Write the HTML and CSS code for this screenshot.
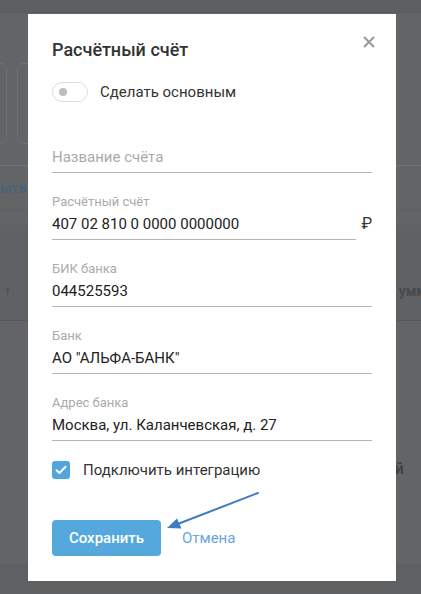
FILE: index.html
```html
<!DOCTYPE html>
<html lang="ru">
<head>
<meta charset="utf-8">
<link rel="stylesheet" href="styles.css">
</head>
<body>
<div class="page">
  <div class="topbar"></div>
  <div class="cards">
    <div class="card card-a"></div>
    <div class="card card-b"></div>
  </div>
  <div class="tabs"><span class="tab-text">ыть</span></div>
  <div class="band"></div>
  <div class="thead">
    <span class="sort">↑</span>
    <span class="col">умм</span>
  </div>
  <div class="tbody">
    <span class="cell">й</span>
  </div>
  <div class="footer"></div>

  <div class="modal">
    <div class="modal-head">
      <h1 class="title">Расчётный счёт</h1>
      <svg class="close" width="12" height="12" viewBox="0 0 12 12"><path d="M1 1L11 11M11 1L1 11" stroke="#9a9a9a" stroke-width="2"/></svg>
    </div>
    <div class="toggle-row">
      <span class="toggle"><span class="knob"></span></span>
      <span class="toggle-text">Сделать основным</span>
    </div>
    <div class="field first">
      <div class="line"><span class="placeholder">Название счёта</span></div>
    </div>
    <div class="field">
      <div class="label">Расчётный счёт</div>
      <div class="with-suffix">
        <div class="line grow"><span class="value">407 02 810 0 0000 0000000</span></div>
        <span class="suffix">₽</span>
      </div>
    </div>
    <div class="field">
      <div class="label">БИК банка</div>
      <div class="line"><span class="value">044525593</span></div>
    </div>
    <div class="field">
      <div class="label">Банк</div>
      <div class="line"><span class="value">АО "АЛЬФА-БАНК"</span></div>
    </div>
    <div class="field">
      <div class="label">Адрес банка</div>
      <div class="line"><span class="value">Москва, ул. Каланчевская, д. 27</span></div>
    </div>
    <div class="check-row">
      <span class="checkbox"><svg width="12" height="10" viewBox="0 0 12 10"><path d="M1.5 5.2L4.5 8L10.5 1.8" fill="none" stroke="#fff" stroke-width="2" stroke-linecap="round" stroke-linejoin="round"/></svg></span>
      <span class="check-text">Подключить интеграцию</span>
    </div>
    <div class="actions">
      <button class="btn">Сохранить</button>
      <span class="cancel">Отмена</span>
    </div>
  </div>

  <svg class="annot" width="421" height="594" viewBox="0 0 421 594">
    <path d="M258 493L179 523.5" stroke="#3d7cc3" stroke-width="2" stroke-linecap="round"/>
    <path d="M167 528L181.5 528.5L177 518.5Z" fill="#3d7cc3"/>
  </svg>
</div>
</body>
</html>
```

FILE: styles.css
```css
* { box-sizing: border-box; }
html, body { margin: 0; padding: 0; }
body { font-family: Roboto, "Noto Sans", "Liberation Sans", sans-serif; }

.page {
  position: relative;
  width: 421px;
  height: 594px;
  overflow: hidden;
  background: #636466;
}

.topbar {
  height: 13px;
  background: #5e5f61;
  border-bottom: 1px solid #5a5b5d;
}

.cards {
  display: flex;
  gap: 10px;
  margin-top: 50px;
  height: 81px;
  margin-left: -20px;
}
.card {
  border: 1px solid #707174;
  border-radius: 6px;
  height: 81px;
}
.card-a { width: 27px; }
.card-b { width: 300px; }

.tabs {
  margin-top: 21px;
  height: 46px;
  border-top: 1px solid #6a7685;
  border-bottom: 1px solid #5d5e60;
  display: flex;
  align-items: center;
}
.tab-text {
  color: #47617a;
  font-weight: 700;
  font-size: 14px;
}

.band {
  margin-top: 14px;
  height: 22px;
  background: #606163;
}

.thead {
  height: 74px;
  background: #606163;
  border-bottom: 1px solid #59595b;
  display: flex;
  align-items: center;
  justify-content: space-between;
  padding: 14px 0 0 4px;
}
.sort { color: #4b4c4e; font-size: 15px; font-weight: 700; }
.col { color: #48494b; font-size: 14px; font-weight: 700; margin-right: -6px; }

.tbody {
  height: 243px;
  display: flex;
  justify-content: flex-end;
  align-items: flex-start;
  padding-top: 138px;
}
.cell { color: #3f4042; font-size: 16px; font-weight: 500; margin-right: 17px; }

.footer {
  height: 40px;
  background: #5f6062;
}

.modal {
  position: absolute;
  left: 28px;
  top: 14px;
  width: 368px;
  height: 567px;
  background: #fff;
  padding: 24px 24px 24px 24px;
}

.modal-head {
  display: flex;
  justify-content: space-between;
  align-items: flex-start;
}
.title {
  margin: 0;
  font-size: 18px;
  line-height: 24px;
  font-weight: 500;
  color: #333;
}
.close { margin-top: -2px; margin-right: -3px; }

.toggle-row {
  display: flex;
  align-items: center;
  margin-top: 20px;
  height: 20px;
}
.toggle {
  width: 36px;
  height: 20px;
  border: 1px solid #dedede;
  border-radius: 10px;
  display: flex;
  align-items: center;
  padding-left: 6px;
}
.knob {
  width: 8px;
  height: 8px;
  border-radius: 50%;
  background: #bdbdbd;
}
.toggle-text {
  margin-left: 12px;
  font-size: 15px;
  color: #333;
}

.field { margin-top: 21px; }
.field.first { margin-top: 44px; }
.label {
  font-size: 13px;
  line-height: 16px;
  color: #aaa;
  margin-bottom: 3px;
}
.line {
  border-bottom: 1px solid #b5b5b5;
  padding-bottom: 4px;
  height: 27px;
}
.value, .placeholder {
  display: block;
  font-size: 15px;
  line-height: 22px;
  color: #222;
}
.placeholder { color: #aaa; }

.with-suffix {
  display: flex;
  align-items: flex-start;
}
.grow { flex: 1; }
.suffix {
  width: 16px;
  text-align: right;
  font-size: 16px;
  line-height: 22px;
  color: #333;
}

.check-row {
  display: flex;
  align-items: center;
  margin-top: 20px;
  height: 18px;
}
.checkbox {
  width: 18px;
  height: 18px;
  border-radius: 3px;
  background: #52a5dd;
  display: flex;
  align-items: center;
  justify-content: center;
}
.check-text {
  margin-left: 13px;
  font-size: 15px;
  color: #333;
}

.actions {
  display: flex;
  align-items: center;
  margin-top: 41px;
}
.btn {
  width: 109px;
  height: 36px;
  border: none;
  border-radius: 4px;
  background: #55a8de;
  color: #fff;
  font-family: inherit;
  font-size: 15px;
  font-weight: 500;
  padding: 0;
}
.cancel {
  margin-left: 21px;
  font-size: 15px;
  color: #6aa5e0;
}

.annot {
  position: absolute;
  left: 0;
  top: 0;
  pointer-events: none;
}
```
